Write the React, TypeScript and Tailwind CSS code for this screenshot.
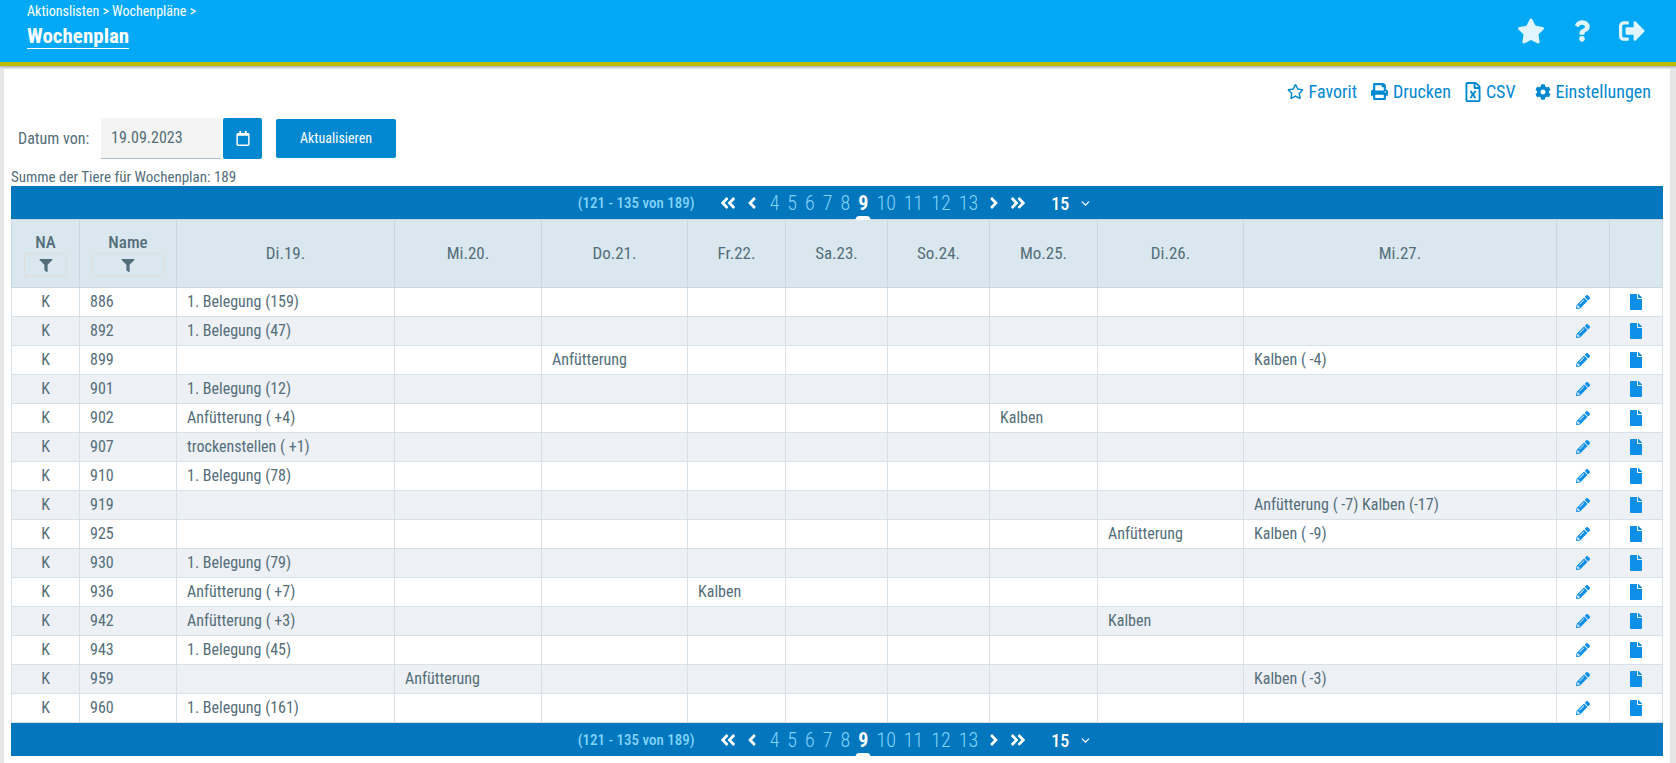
import {
  FaAngleDoubleLeft,
  FaAngleDoubleRight,
  FaAngleLeft,
  FaAngleRight,
  FaCog,
  FaFile,
  FaFilter,
  FaPencilAlt,
  FaPrint,
  FaQuestion,
  FaRegCalendar,
  FaRegFileExcel,
  FaRegStar,
  FaSignOutAlt,
  FaStar,
} from "react-icons/fa";
import { ChevronDown } from "lucide-react";

const DAYS = ["Di.19.", "Mi.20.", "Do.21.", "Fr.22.", "Sa.23.", "So.24.", "Mo.25.", "Di.26.", "Mi.27."];
const WIDTHS = [68, 97, 218, 147, 146, 98, 102, 102, 108, 146, 313, 53, 53];

// name, then the cell text per day column
const ROWS: [string, Record<number, string>][] = [
  ["886", { 0: "1. Belegung (159)" }],
  ["892", { 0: "1. Belegung (47)" }],
  ["899", { 2: "Anfütterung", 8: "Kalben ( -4)" }],
  ["901", { 0: "1. Belegung (12)" }],
  ["902", { 0: "Anfütterung ( +4)", 6: "Kalben" }],
  ["907", { 0: "trockenstellen ( +1)" }],
  ["910", { 0: "1. Belegung (78)" }],
  ["919", { 8: "Anfütterung ( -7) Kalben (-17)" }],
  ["925", { 7: "Anfütterung", 8: "Kalben ( -9)" }],
  ["930", { 0: "1. Belegung (79)" }],
  ["936", { 0: "Anfütterung ( +7)", 3: "Kalben" }],
  ["942", { 0: "Anfütterung ( +3)", 7: "Kalben" }],
  ["943", { 0: "1. Belegung (45)" }],
  ["959", { 1: "Anfütterung", 8: "Kalben ( -3)" }],
  ["960", { 0: "1. Belegung (161)" }],
];

function Pager() {
  return (
    <div className="relative flex h-[33px] items-center justify-center bg-[#0277bd] pr-[4px] pt-[1px]">
      <span className="mr-[24px] text-[15px] font-medium text-[#81d4fa]">(121 - 135 von 189)</span>
      <div className="flex items-center text-white">
        <FaAngleDoubleLeft className="h-[18px] w-[18px]" />
        <FaAngleLeft className="ml-[7px] h-[18px] w-[16px]" />
      </div>
      <div className="ml-[10px] flex items-center gap-[8px] text-[20px] font-light text-[#81d4fa]">
        {[4, 5, 6, 7, 8].map((n) => (
          <span key={n}>{n}</span>
        ))}
        <span className="relative font-bold text-white">
          9
          <span className="absolute bottom-[-2px] left-1/2 h-[4px] w-[15px] -translate-x-1/2 rounded-t-full bg-white" />
        </span>
        {[10, 11, 12, 13].map((n) => (
          <span key={n}>{n}</span>
        ))}
      </div>
      <div className="ml-[8px] flex items-center text-white">
        <FaAngleRight className="h-[18px] w-[16px]" />
        <FaAngleDoubleRight className="ml-[7px] h-[18px] w-[18px]" />
      </div>
      <span className="ml-[24px] text-[18px] font-medium text-white">15</span>
      <ChevronDown className="ml-[10px] h-[13px] w-[13px] text-white" strokeWidth={2.25} />
    </div>
  );
}

function FilterBox({ width }: { width: string }) {
  return (
    <div className={`mx-auto mt-[1px] flex h-[24px] items-center justify-center border border-[#e0dedb] ${width}`}>
      <FaFilter className="h-[13px] w-[14px] text-[#546e7a]" />
    </div>
  );
}

export default function App() {
  return (
    <div className="h-[763px] overflow-hidden bg-[#e6e6e6] font-['Roboto_Condensed','Liberation_Sans_Narrow',Roboto,sans-serif] [font-stretch:75%] text-[#546e7a]">
      <header className="relative flex h-[66px] items-start justify-between border-b-[4px] border-[#bcbc00] bg-[#03a9f4] pl-[27px] pr-[30px] text-white shadow-[0_1px_2px_rgba(0,0,0,0.3)]">
        <div>
          <div className="mt-[2px] text-[14px] leading-[18px]">Aktionslisten &gt; Wochenpläne &gt;</div>
          <div className="mt-[4px] inline-block border-b border-white text-[21px] font-bold leading-[24px]">Wochenplan</div>
        </div>
        <div className="mt-[18px] flex items-center text-[#e1f5fe]">
          <FaStar className="h-[26px] w-[28px]" />
          <FaQuestion className="ml-[29px] h-[22px] w-[16px]" />
          <FaSignOutAlt className="ml-[28px] h-[26px] w-[28px]" />
        </div>
      </header>

      <main className="mx-[4px] mt-[3px] h-[694px] w-[1666px] bg-white pl-[7px] pr-[7px]">
        <div className="flex h-[49px] items-center justify-end pb-[4px] pr-[12px] text-[18px] text-[#0288d1]">
          <FaRegStar className="h-[17px] w-[17px]" />
          <span className="ml-[5px]">Favorit</span>
          <FaPrint className="ml-[14px] h-[17px] w-[17px]" />
          <span className="ml-[5px]">Drucken</span>
          <FaRegFileExcel className="ml-[14px] h-[20px] w-[16px]" />
          <span className="ml-[5px]">CSV</span>
          <FaCog className="ml-[19px] h-[16px] w-[16px]" />
          <span className="ml-[5px]">Einstellungen</span>
        </div>

        <div className="flex h-[41px] items-center">
          <span className="ml-[7px] w-[83px] text-[16px]">Datum von:</span>
          <div className="flex h-[41px] w-[120px] items-center border-b border-[#b0bec5] bg-[#f4f4f4] pl-[10px] text-[16px]">
            19.09.2023
          </div>
          <button className="ml-[2px] flex h-[41px] w-[39px] items-center justify-center rounded-[2px] bg-[#0288d1] text-white">
            <FaRegCalendar className="h-[15px] w-[14px]" />
          </button>
          <button className="ml-[14px] h-[39px] w-[120px] rounded-[2px] bg-[#0288d1] text-[14px] font-normal text-white">
            Aktualisieren
          </button>
        </div>

        <div className="mt-[9px] h-[18px] text-[15px] leading-[18px] text-[#546e7a]">Summe der Tiere für Wochenplan: 189</div>

        <Pager />

        <table className="w-[1652px] table-fixed border-collapse text-[16px]">
          <colgroup>
            {WIDTHS.map((w, i) => (
              <col key={i} style={{ width: w }} />
            ))}
          </colgroup>
          <thead>
            <tr className="h-[68px] bg-[#dae7ef]">
              <th className="border border-[#c8d7e0] align-top text-[17px] font-medium">
                <div className="mt-[12px] leading-[20px]">NA</div>
                <FilterBox width="w-[43px]" />
              </th>
              <th className="border border-[#c8d7e0] align-top text-[17px] font-medium">
                <div className="mt-[12px] leading-[20px]">Name</div>
                <FilterBox width="w-[72px]" />
              </th>
              {DAYS.map((d, i) => (
                <th key={i} className="border border-[#c8d7e0] text-[17px] font-normal">
                  {d}
                </th>
              ))}
              <th className="border border-[#c8d7e0]" />
              <th className="border border-[#c8d7e0]" />
            </tr>
          </thead>
          <tbody>
            {ROWS.map(([name, cells], r) => (
              <tr key={name} className={`h-[29px] ${r % 2 ? "bg-[#edf0f5]" : "bg-white"}`}>
                <td className="border border-[#d8e1e8] text-center">K</td>
                <td className="border border-[#d8e1e8] px-[10px]">{name}</td>
                {DAYS.map((_, i) => (
                  <td key={i} className="truncate border border-[#d8e1e8] px-[10px]">
                    {cells[i] ?? ""}
                  </td>
                ))}
                <td className="border border-[#d8e1e8]">
                  <FaPencilAlt className="mx-auto h-[14px] w-[14px] text-[#0d8fe8]" />
                </td>
                <td className="border border-[#d8e1e8]">
                  <FaFile className="mx-auto h-[16px] w-[14px] text-[#0d8fe8]" />
                </td>
              </tr>
            ))}
          </tbody>
        </table>

        <Pager />
      </main>
    </div>
  );
}
